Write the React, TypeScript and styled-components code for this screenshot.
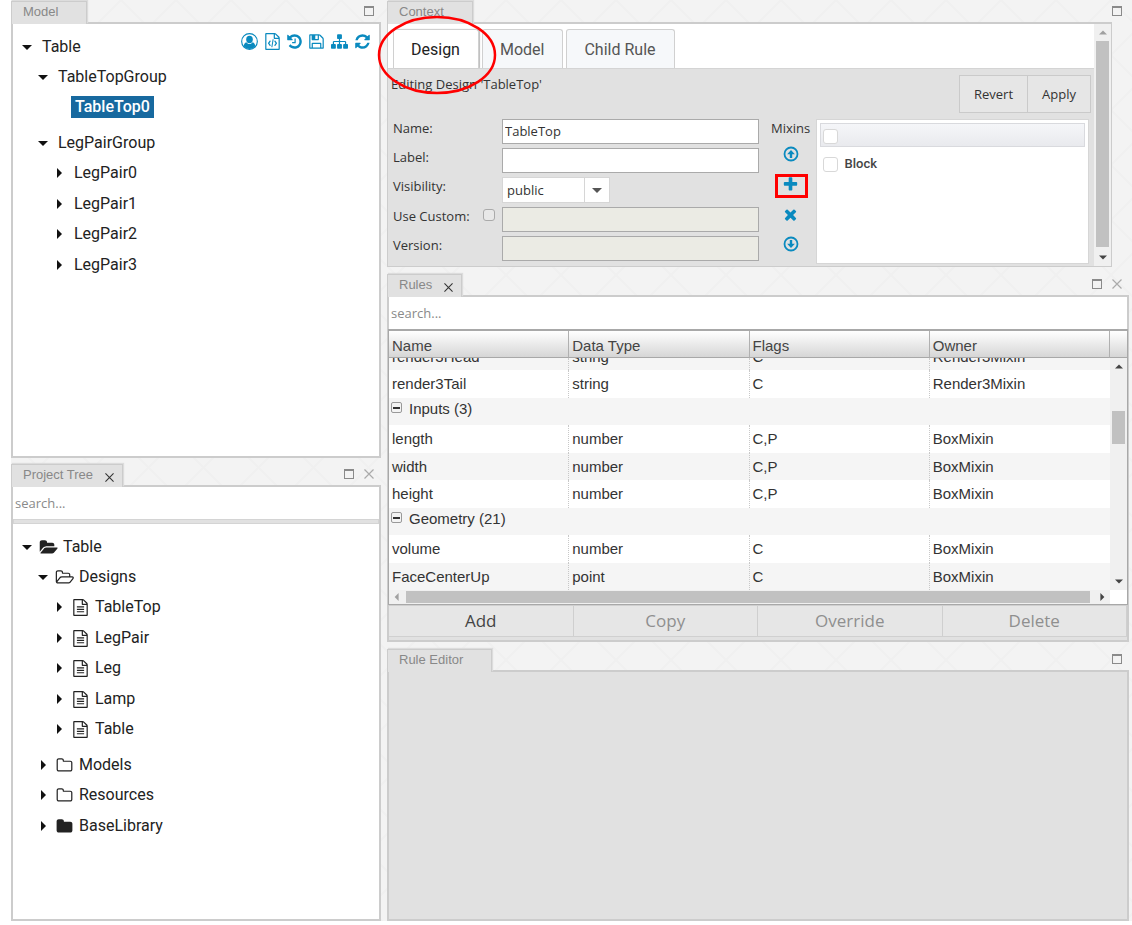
import React from "react";
import styled, { createGlobalStyle, css } from "styled-components";

const LINE = "#cccccc";
const PANEL = "#e1e1e1";
const BLUE = "#0a8abf";
const OPEN_SANS = '"Open Sans", "Noto Sans", sans-serif';
const ROBOTO = 'Roboto, "Liberation Sans", sans-serif';
const ARIAL = '"Liberation Sans", Arial, sans-serif';

const GlobalStyle = createGlobalStyle`
  *, *::before, *::after { box-sizing: border-box; }
  body { margin: 0; background: #fff; color: #333; font-family: ${OPEN_SANS}; }
  button, input, select { font: inherit; color: inherit; margin: 0; border-radius: 0; }
  ul { list-style: none; margin: 0; padding: 0; }
`;

/* ---------- icons ---------- */

const PATHS = {
  folderOpen:
    "M1943 952q0 31-31 66l-336 396q-43 51-120.5 86.5t-143.5 35.5h-1088q-34 0-60.5-13t-26.5-43q0-31 31-66l336-396q43-51 120.5-86.5t143.5-35.5h1088q34 0 60.5 13t26.5 43zm-343-344v160h-832q-94 0-197 47.5t-164 119.5l-337 396-5 6q0-4-.5-12.5t-.5-12.5v-960q0-92 66-158t158-66h320q92 0 158 66t66 158v32h544q92 0 158 66t66 158z",
  folderOpenO:
    "M1845 931q0-35-53-35h-1088q-40 0-85.5 21.5t-71.5 52.5l-294 363q-18 24-18 40 0 35 53 35h1088q40 0 86-22t71-53l294-363q18-22 18-39zm-1141-163h768v-160q0-40-28-68t-68-28h-576q-40 0-68-28t-28-68v-64q0-40-28-68t-68-28h-320q-40 0-68 28t-28 68v853l256-315q44-53 116-87.5t140-34.5zm1269 163q0 62-46 120l-295 363q-43 53-116 87.5t-140 34.5h-1088q-92 0-158-66t-66-158v-960q0-92 66-158t158-66h320q92 0 158 66t66 158v32h544q92 0 158 66t66 158v160h192q54 0 99 24.5t67 70.5q15 32 15 68z",
  folderO:
    "M1600 1312v-704q0-40-28-68t-68-28h-704q-40 0-68-28t-28-68v-64q0-40-28-68t-68-28h-320q-40 0-68 28t-28 68v960q0 40 28 68t68 28h1216q40 0 68-28t28-68zm128-704v704q0 92-66 158t-158 66h-1216q-92 0-158-66t-66-158v-960q0-92 66-158t158-66h320q92 0 158 66t66 158v32h672q92 0 158 66t66 158z",
  folder:
    "M1728 608v704q0 92-66 158t-158 66h-1216q-92 0-158-66t-66-158v-960q0-92 66-158t158-66h320q92 0 158 66t66 158v32h672q92 0 158 66t66 158z",
  fileText:
    "M1596 380q28 28 48 76t20 88v1152q0 40-28 68t-68 28h-1344q-40 0-68-28t-28-68v-1600q0-40 28-68t68-28h896q40 0 88 20t76 48zm-444-244v376h376q-10-29-22-41l-313-313q-12-12-41-22zm384 1528v-1024h-416q-40 0-68-28t-28-68v-416h-768v1536h1280zm-1024-864q0-14 9-23t23-9h704q14 0 23 9t9 23v64q0 14-9 23t-23 9h-704q-14 0-23-9t-9-23v-64zm736 224q14 0 23 9t9 23v64q0 14-9 23t-23 9h-704q-14 0-23-9t-9-23v-64q0-14 9-23t23-9h704zm0 256q14 0 23 9t9 23v64q0 14-9 23t-23 9h-704q-14 0-23-9t-9-23v-64q0-14 9-23t23-9h704z",
  fileCode:
    "M1596 380q28 28 48 76t20 88v1152q0 40-28 68t-68 28h-1344q-40 0-68-28t-28-68v-1600q0-40 28-68t68-28h896q40 0 88 20t76 48zm-444-244v376h376q-10-29-22-41l-313-313q-12-12-41-22zm384 1528v-1024h-416q-40 0-68-28t-28-68v-416h-768v1536h1280zM608 800q8-11 21-12.500t24 6.500l51 38q11 8 12.500 21t-6.500 24l-142 203 142 203q8 11 6.500 24t-12.500 21l-51 38q-11 8-24 6.500t-21-12.500l-186-261q-14-19 0-38zm576 0q-8-11-21-12.500t-24 6.500l-51 38q-11 8-12.500 21t6.500 24l142 203-142 203q-8 11-6.500 24t12.500 21l51 38q11 8 24 6.500t21-12.500l186-261q14-19 0-38zM803 1500q-13-2-20.500-13t-5.500-24l128-781q2-13 13-20.500t24-5.500l43 10q13 2 20.500 13t5.500 24l-128 781q-2 13-13 20.500t-24 5.500z",
  history:
    "M1664 896q0 156-61 298t-164 245-245 164-298 61q-172 0-327-72.5t-264-204.5q-7-10-6.5-22.5t8.5-20.5l137-138q10-9 25-9 16 2 23 12 73 95 179 147t225 52q104 0 198.500-40.500t163.500-109.500 109.500-163.500 40.500-198.500-40.500-198.500-109.500-163.500-163.500-109.500-198.500-40.500q-98 0-188 35.500t-160 101.500l137 138q31 30 14 69-17 40-59 40h-448q-26 0-45-19t-19-45v-448q0-42 40-59 39-17 69 14l130 129q107-101 244.500-156.500t284.500-55.500q156 0 298 61t245 164 164 245 61 298zm-640-288v448q0 14-9 23t-23 9h-320q-14 0-23-9t-9-23v-64q0-14 9-23t23-9h224v-352q0-14 9-23t23-9h64q14 0 23 9t9 23z",
  floppy:
    "M512 1536h768v-384h-768v384zm896 0h128v-896q0-14-10-38.500t-20-34.500l-281-281q-10-10-34-20t-39-10v416q0 40-28 68t-68 28h-576q-40 0-68-28t-28-68v-416h-128v1280h128v-416q0-40 28-68t68-28h832q40 0 68 28t28 68v416zm-384-928v-320q0-13-9.500-22.500t-22.500-9.500h-192q-13 0-22.500 9.500t-9.500 22.500v320q0 13 9.500 22.500t22.500 9.500h192q13 0 22.500-9.500t9.500-22.500zm640 32v928q0 40-28 68t-68 28h-1344q-40 0-68-28t-28-68v-1344q0-40 28-68t68-28h928q40 0 88 20t76 48l280 280q28 28 48 76t20 88z",
  sitemap:
    "M1792 1248v320q0 40-28 68t-68 28h-320q-40 0-68-28t-28-68v-320q0-40 28-68t68-28h96v-192h-512v192h96q40 0 68 28t28 68v320q0 40-28 68t-68 28h-320q-40 0-68-28t-28-68v-320q0-40 28-68t68-28h96v-192h-512v192h96q40 0 68 28t28 68v320q0 40-28 68t-68 28h-320q-40 0-68-28t-28-68v-320q0-40 28-68t68-28h96v-192q0-52 38-90t90-38h512v-192h-96q-40 0-68-28t-28-68v-320q0-40 28-68t68-28h320q40 0 68 28t28 68v320q0 40-28 68t-68 28h-96v192h512q52 0 90 38t38 90v192h96q40 0 68 28t28 68z",
  refresh:
    "M1639 1056q0 5-1 7-64 268-268 434.500t-478 166.500q-146 0-282.500-55t-243.500-157l-129 129q-19 19-45 19t-45-19-19-45v-448q0-26 19-45t45-19h448q26 0 45 19t19 45-19 45l-137 137q71 66 161 102t187 36q134 0 250-65t186-179q11-17 53-117 8-23 30-23h192q13 0 22.500 9.500t9.500 22.500zm25-800v448q0 26-19 45t-45 19h-448q-26 0-45-19t-19-45 19-45l138-138q-148-137-349-137-134 0-250 65t-186 179q-11 17-53 117-8 23-30 23h-199q-13 0-22.500-9.500t-9.500-22.500v-7q65-268 270-434.500t480-166.500q146 0 284 55.500t245 156.500l130-129q19-19 45-19t45 19 19 45z",
  plus:
    "M1600 736v192q0 40-28 68t-68 28h-416v416q0 40-28 68t-68 28h-192q-40 0-68-28t-28-68v-416h-416q-40 0-68-28t-28-68v-192q0-40 28-68t68-28h416v-416q0-40 28-68t68-28h192q40 0 68 28t28 68v416h416q40 0 68 28t28 68z",
  times:
    "M1490 1322q0 40-28 68l-136 136q-28 28-68 28t-68-28l-294-294-294 294q-28 28-68 28t-68-28l-136-136q-28-28-28-68t28-68l294-294-294-294q-28-28-28-68t28-68l136-136q28-28 68-28t68 28l294 294 294-294q28-28 68-28t68 28l136 136q28 28 28 68t-28 68l-294 294 294 294q28 28 28 68z",
};

type IconName = keyof typeof PATHS;

/* narrow glyphs occupy six sevenths of the em box */
const BOXES: Partial<Record<IconName, [number, number, number]>> = {
  folderOpen: [0, 1973, 19],
  folderOpenO: [0, 1973, 19],
  fileCode: [128, 1536, 15],
  fileText: [128, 1536, 15],
  history: [128, 1536, 15],
  floppy: [128, 1536, 15],
  refresh: [128, 1536, 15],
};

const Svg = styled.svg`
  display: block;
  flex: none;
  fill: currentColor;
`;

function Icon({ name }: { name: IconName }) {
  const [x, w, px] = BOXES[name] ?? [0, 1792, 17];
  return (
    <Svg width={px} height={17} viewBox={`${x} 0 ${w} 1792`} aria-hidden="true">
      <path d={PATHS[name]} />
    </Svg>
  );
}

function UserIcon() {
  return (
    <Svg width={17} height={17} viewBox="0 0 18 18" aria-hidden="true">
      <circle cx="9" cy="9" r="8.300" fill="none" stroke="currentColor" strokeWidth="1.200" />
      <ellipse cx="9" cy="6.900" rx="3.500" ry="3.900" />
      <path d="M5.700 9.800C3.900 10.400 3 12 2.900 14.100C4.400 15.900 6.500 17 9 17s4.600-1.100 6.100-2.900C15 12 14.100 10.400 12.300 9.800C11.500 11 10.300 11.700 9 11.700S6.500 11 5.700 9.800z" />
    </Svg>
  );
}

function ArrowCircle({ down }: { down?: boolean }) {
  return (
    <Svg width={16} height={16} viewBox="0 0 16 16" aria-hidden="true">
      <circle cx="8" cy="8" r="6.500" fill="none" stroke="currentColor" strokeWidth="1.800" />
      <path d={down ? "M6.800 4h2.400v3.800h2.700L8 12 4.100 7.800h2.700z" : "M6.800 12h2.400V8.200h2.700L8 4 4.100 8.200h2.700z"} />
    </Svg>
  );
}

type Direction = "up" | "down" | "left" | "right";

const ARROWS: Record<Direction, string> = {
  up: "M0 7l5-5 5 5z",
  down: "M0 3l5 5 5-5z",
  left: "M7 0L2 5l5 5z",
  right: "M3 0l5 5-5 5z",
};

function Arrow({ to, size = 8 }: { to: Direction; size?: number }) {
  return (
    <Svg width={size} height={size} viewBox="0 0 10 10" aria-hidden="true">
      <path d={ARROWS[to]} />
    </Svg>
  );
}

function CrossIcon({ size }: { size: number }) {
  return (
    <Svg width={size} height={size} viewBox="0 0 10 10" aria-hidden="true">
      <path d="M.5.5l9 9M9.500.5l-9 9" fill="none" stroke="currentColor" strokeWidth="1.200" />
    </Svg>
  );
}

/* ---------- docking panels ---------- */

const Page = styled.main`
  min-height: 100vh;
  padding: 0 0 4px 11px;
  display: flex;
`;

const Workspace = styled.div`
  flex: 1;
  min-width: 0;
  display: grid;
  grid-template-columns: minmax(0, 370fr) minmax(0, 742fr);
  gap: 6px;
  padding-right: 3px;
  background-color: #f3f3f3;
  background-image: linear-gradient(45deg, transparent 49%, #f0f0f0 49%, #f0f0f0 51%, transparent 51%),
    linear-gradient(-45deg, transparent 49%, #f0f0f0 49%, #f0f0f0 51%, transparent 51%);
  background-size: 55px 55px;
`;

const LeftColumn = styled.div`
  display: grid;
  grid-template-rows: 1fr 1fr;
  gap: 5px;
`;

const RightColumn = styled.div`
  display: flex;
  flex-direction: column;
  gap: 6px;
  min-width: 0;
`;

const Panel = styled.section<{ $grow?: boolean }>`
  display: flex;
  flex-direction: column;
  min-width: 0;
  ${(p) => p.$grow && css`flex: 1;`}
`;

const PanelHead = styled.header`
  height: 22px;
  padding-top: 1px;
  display: flex;
  align-items: flex-start;
`;

const PanelTab = styled.div<{ $wide?: boolean }>`
  position: relative;
  height: 23px;
  padding: 0 ${(p) => (p.$wide ? 28 : 8)}px 2px 11px;
  display: flex;
  align-items: center;
  gap: 12px;
  border: 1px solid ${LINE};
  border-bottom: 0;
  background: ${PANEL};
  box-shadow: 1px -1px 1px #dcdcdc;
  color: #888;
  font: 13px/20px ${ARIAL};
  white-space: nowrap;
`;

const PanelTools = styled.div`
  margin-left: auto;
  padding: 5px 7px 0 0;
  display: flex;
  gap: 10px;
  color: #aaa;
`;

const PlainButton = styled.button`
  display: flex;
  align-items: center;
  justify-content: center;
  padding: 0;
  border: 0;
  background: none;
  cursor: pointer;
`;

const CloseTab = styled(PlainButton)`
  padding-top: 4px;
  color: #333;
`;

const Maximize = styled.button`
  width: 10px;
  height: 10px;
  padding: 0;
  border: 1px solid #8a8a8a;
  border-top-width: 2px;
  background: none;
  cursor: pointer;
`;

const PanelBody = styled.div<{ $fill?: string }>`
  flex: 1;
  display: flex;
  flex-direction: column;
  border: 2px solid ${LINE};
  background: ${(p) => p.$fill ?? "#fff"};
  min-width: 0;
`;

type HeaderProps = { title: string; closable?: boolean; wide?: boolean };

function Header({ title, closable, wide }: HeaderProps) {
  return (
    <PanelHead>
      <PanelTab $wide={wide}>
        {title}
        {closable && (
          <CloseTab aria-label={`Close ${title}`}>
            <CrossIcon size={9} />
          </CloseTab>
        )}
      </PanelTab>
      <PanelTools>
        <Maximize aria-label={`Maximize ${title}`} />
        {closable && (
          <PlainButton aria-label={`Hide ${title}`}>
            <CrossIcon size={10} />
          </PlainButton>
        )}
      </PanelTools>
    </PanelHead>
  );
}

/* ---------- trees ---------- */

const TreeArea = styled.div`
  flex: 1;
  display: flex;
  align-items: flex-start;
  padding: 8px 9px 8px 6px;
`;

const TreeRoot = styled.ul`
  flex: 1;
  color: #222;
  font: 16px/30px ${ROBOTO};
`;

const Branch = styled.ul`
  padding: 0 0 5px 16px;
`;

const TreeItem = styled.li`
  &:nth-child(even) {
    margin-top: 1px;
  }
`;

const TreeRow = styled.div`
  display: flex;
  align-items: center;
  height: 30px;
`;

const Toggle = styled(PlainButton)`
  width: 16px;
  height: 16px;
  color: #111;
`;

const IconSlot = styled.span`
  width: 22px;
  margin: 0 -3px 0 2px;
  display: flex;
  justify-content: center;
`;

const NodeLabel = styled.span`
  margin-left: 3px;
  padding: 0 4px;
  line-height: 22px;
  white-space: nowrap;
`;

const SelectedLabel = styled(NodeLabel)`
  margin-left: 20px;
  background: #17699f;
  color: #fff;
  font-weight: 500;
`;

const IconBar = styled.div`
  display: flex;
  align-items: center;
  gap: 7px;
  padding-top: 1px;
  color: ${BLUE};
  button { color: inherit; }
`;

type TreeNode = { label: string; icon?: IconName; selected?: boolean; children?: TreeNode[] };

function Node({ node }: { node: TreeNode }) {
  return (
    <TreeItem>
      <TreeRow>
        {node.selected ? (
          <SelectedLabel>{node.label}</SelectedLabel>
        ) : (
          <>
            <Toggle aria-label={`Toggle ${node.label}`}>
              <Arrow to={node.children ? "down" : "right"} size={10} />
            </Toggle>
            {node.icon && <IconSlot><Icon name={node.icon} /></IconSlot>}
            <NodeLabel>{node.label}</NodeLabel>
          </>
        )}
      </TreeRow>
      {node.children && (
        <Branch>
          {node.children.map((c) => <Node key={c.label} node={c} />)}
        </Branch>
      )}
    </TreeItem>
  );
}

const MODEL: TreeNode = {
  label: "Table",
  children: [
    { label: "TableTopGroup", children: [{ label: "TableTop0", selected: true }] },
    {
      label: "LegPairGroup",
      children: ["LegPair0", "LegPair1", "LegPair2", "LegPair3"].map((label) => ({ label })),
    },
  ],
};

const PROJECT: TreeNode = {
  label: "Table",
  icon: "folderOpen",
  children: [
    {
      label: "Designs",
      icon: "folderOpenO",
      children: ["TableTop", "LegPair", "Leg", "Lamp", "Table"].map((label) => ({ label, icon: "fileText" as IconName })),
    },
    { label: "Models", icon: "folderO" },
    { label: "Resources", icon: "folderO" },
    { label: "BaseLibrary", icon: "folder" },
  ],
};

const Search = styled.input`
  width: 100%;
  height: 32px;
  padding: 0 2px;
  border: 0;
  background: #fff;
  font-size: 13px;
  &::placeholder { color: #8a8a8a; opacity: 1; }
`;

const Divider = styled.div`
  height: 5px;
  border: 1px solid #d4d4d4;
  background: ${PANEL};
`;

/* ---------- context panel ---------- */

const ContextBody = styled.div`
  display: flex;
  margin-right: 17px;
  border: 1px solid ${LINE};
  border-top-width: 2px;
  background: ${PANEL};
`;

const ContextContent = styled.div`
  flex: 1;
  min-width: 0;
`;

const Tabs = styled.div`
  display: flex;
  align-items: flex-end;
  gap: 3px;
  height: 45px;
  padding-left: 5px;
  border-bottom: 1px solid #d4d4d4;
  background: #fff;
`;

const Tab = styled.button<{ $active?: boolean }>`
  height: 39px;
  padding: 2px 18px 0 17px;
  border: 1px solid #d0d0d0;
  border-bottom: 0;
  border-radius: 3px 3px 0 0;
  background: ${(p) => (p.$active ? "#fff" : "#f6f8fa")};
  color: ${(p) => (p.$active ? "#222" : "#555")};
  font: 16px/36px ${ROBOTO};
  ${(p) => p.$active && css`box-shadow: 1px 0 1px #bbb;`}
`;

const EditBar = styled.div`
  display: flex;
  align-items: flex-start;
  justify-content: space-between;
  padding: 6px 3px 6px 3px;
  font-size: 13px;
  line-height: 18px;
`;

const EditButtons = styled.div`
  display: flex;
`;

const FormButton = styled.button`
  height: 38px;
  padding: 0 14px;
  border: 1px solid #cacaca;
  background: #e6e6e6;
  font-size: 13px;
  & + & { margin-left: -1px; }
`;

const Form = styled.div`
  display: grid;
  grid-template-columns: minmax(0, 365fr) 57px minmax(0, 273fr);
  padding: 0 5px 2px;
  font-size: 13px;
  line-height: 18px;
`;

const Fields = styled.div`
  display: flex;
  flex-direction: column;
  gap: 4px;
`;

const Field = styled.div`
  display: flex;
  align-items: flex-start;
`;

const FieldLabel = styled.label`
  width: 90px;
  flex: none;
`;

const CheckSlot = styled.div`
  width: 19px;
  height: 16px;
  flex: none;
  display: flex;
  align-items: center;
`;

const Check = styled.input<{ $size: number }>`
  appearance: none;
  flex: none;
  width: ${(p) => p.$size}px;
  height: ${(p) => p.$size}px;
  border: 1px solid ${(p) => (p.$size > 12 ? "#d8d8d8" : "#aaa")};
  border-radius: 3px;
  background: ${(p) => (p.$size > 12 ? "#fff" : "#e8e8e8")};
`;

const TextInput = styled.input`
  flex: 1;
  min-width: 0;
  height: 25px;
  padding: 0 2px 2px;
  border: 1px solid #aaa;
  background: #fff;
  &:disabled { background: #ebebe4; }
`;

const SelectBox = styled.div`
  position: relative;
  display: flex;
  border: 1px solid #d6d6d6;
  background: #fff;
`;

const Select = styled.select`
  appearance: none;
  width: 106px;
  height: 24px;
  padding: 0 28px 0 4px;
  border: 0;
  background: none;
`;

const SelectArrow = styled.span`
  position: absolute;
  inset: 0 0 0 auto;
  width: 25px;
  display: flex;
  align-items: center;
  justify-content: center;
  border-left: 1px solid #d6d6d6;
  color: #555;
  pointer-events: none;
`;

const MixinTools = styled.div`
  display: flex;
  flex-direction: column;
  align-items: center;
  padding-left: 7px;
`;

const MixinTitle = styled.span`
  margin-bottom: 2px;
`;

const MixinButton = styled(PlainButton)<{ $marked?: boolean }>`
  position: relative;
  height: 30px;
  width: 32px;
  color: ${BLUE};
  ${(p) => p.$marked && css`
    &::after {
      content: "";
      position: absolute;
      inset: 5px -1px 1px 0;
      border: 3px solid #f00;
    }
  `}
`;

const MixinList = styled.div`
  min-height: 145px;
  border: 1px solid #d6d6d6;
  background: #fff;
  padding: 3px;
  color: #444;
`;

const MixinHead = styled.div`
  height: 24px;
  padding: 2px 2px 0;
  display: flex;
  align-items: center;
  border: 1px solid #d9dade;
  background: linear-gradient(#f5f6f9, #e9eaee);
`;

const MixinRow = styled.label`
  display: flex;
  align-items: center;
  gap: 7px;
  height: 34px;
  padding-left: 3px;
  font: 500 13px/18px ${ROBOTO};
`;

/* ---------- scrollbars ---------- */

const ScrollY = styled.div`
  width: 17px;
  flex: none;
  display: flex;
  flex-direction: column;
  align-items: center;
  justify-content: space-between;
  background: #f0f0f0;
  color: #444;
  padding: 5px 0;
`;

const ThumbY = styled.div<{ $full?: boolean }>`
  width: 13px;
  background: #c1c1c1;
  ${(p) => (p.$full ? css`flex: 1; margin: 4px 0 6px;` : css`height: 33px; margin: 40px 0 auto;`)}
`;

const ScrollX = styled.div`
  display: flex;
  align-items: stretch;
  height: 14px;
  background: #fff;
`;

const ScrollTrack = styled.div`
  flex: 1;
  display: flex;
  align-items: center;
  gap: 5px;
  padding: 0 4px;
  background: #f0f0f0;
  color: #444;
`;

const ThumbX = styled.div`
  flex: 1;
  height: 12px;
  margin-right: 3px;
  background: #c1c1c1;
`;

const ScrollCorner = styled.div`
  width: 17px;
`;

const Faint = styled.span`
  color: #a0a0a0;
`;

/* ---------- rules grid ---------- */

const Grid = styled.div`
  border: 1px solid #a8a8a8;
  border-top-width: 2px;
  font: 15px/25px ${ARIAL};
  margin: 0 -1px;
`;

const GridMain = styled.div`
  display: flex;
`;

const TableArea = styled.div`
  flex: 1;
  min-width: 0;
`;

const Table = styled.table`
  width: 100%;
  table-layout: fixed;
  border-collapse: separate;
  border-spacing: 0;
  color: #333;
`;

const HeadCell = styled.th`
  height: 27px;
  padding: 3px 3px 0;
  border-right: 1px solid #b0b0b0;
  border-bottom: 1px solid #a8a8a8;
  background: linear-gradient(#fff, #d6d6d6);
  color: #444;
  font-weight: 400;
  line-height: 23px;
  text-align: left;
`;

const Row = styled.tr<{ $shade?: boolean }>`
  background: ${(p) => (p.$shade ? "#f5f5f5" : "#fff")};
  &:nth-child(odd) td { height: 27px; }
  &:nth-child(even) td { height: 28px; }
`;

const Cell = styled.td`
  padding: 0 3px 1px;
  border-right: 1px dotted #c8c8c8;
  &:last-child { border-right: 0; }
`;

const ClippedRow = styled.tr`
  background: #f5f5f5;
`;

const ClippedText = styled.div`
  height: 11px;
  display: flex;
  align-items: flex-end;
  overflow: hidden;
`;

const GroupCell = styled.td`
  padding: 0 2px;
  line-height: 21px;
  vertical-align: top;
`;

const GroupTitle = styled.div`
  display: flex;
  align-items: flex-start;
  gap: 7px;
`;

const Collapse = styled(PlainButton)`
  width: 11px;
  height: 11px;
  margin-top: 4px;
  border: 1px solid #999;
  border-radius: 2px;
  background: #f4f4f4;
  &::before {
    content: "";
    width: 7px;
    height: 2px;
    background: #333;
  }
`;

const SideBar = styled.div`
  display: flex;
  flex-direction: column;
  width: 17px;
  flex: none;
`;

const SideHead = styled.div`
  height: 27px;
  border-bottom: 1px solid #a8a8a8;
  background: linear-gradient(#fff, #d6d6d6);
`;

const SideScroll = styled(ScrollY)`
  flex: 1;
`;

const Actions = styled.div`
  display: grid;
  grid-template-columns: repeat(4, 1fr);
  border-bottom: 1px solid #d0d0d0;
  margin-bottom: 3px;
`;

const ActionButton = styled.button`
  height: 31px;
  padding: 0;
  border: 1px solid #cfcfcf;
  border-width: 1px 1px 0 0;
  background: #e6e6e6;
  color: #444;
  font-size: 17px;
  line-height: 24px;
  &:disabled { color: #8f8f8f; }
`;

type RuleRow = { group: string } | { cells: string[]; shade?: boolean };

const RULES: RuleRow[] = [
  { cells: ["render3Tail", "string", "C", "Render3Mixin"] },
  { group: "Inputs (3)" },
  { cells: ["length", "number", "C,P", "BoxMixin"] },
  { cells: ["width", "number", "C,P", "BoxMixin"], shade: true },
  { cells: ["height", "number", "C,P", "BoxMixin"] },
  { group: "Geometry (21)" },
  { cells: ["volume", "number", "C", "BoxMixin"] },
  { cells: ["FaceCenterUp", "point", "C", "BoxMixin"], shade: true },
];

/* ---------- annotation ---------- */

const TabRing = styled.svg`
  position: absolute;
  z-index: 2;
  left: 377px;
  top: 15px;
  overflow: visible;
  pointer-events: none;
`;

export default function App() {
  return (
    <Page>
      <GlobalStyle />
      <Workspace>
        <LeftColumn>
          <Panel>
            <Header title="Model" wide />
            <PanelBody>
              <TreeArea>
                <TreeRoot><Node node={MODEL} /></TreeRoot>
                <IconBar>
                  <PlainButton aria-label="User"><UserIcon /></PlainButton>
                  {(["fileCode", "history", "floppy", "sitemap", "refresh"] as IconName[]).map((n) => (
                    <PlainButton key={n} aria-label={n}><Icon name={n} /></PlainButton>
                  ))}
                </IconBar>
              </TreeArea>
            </PanelBody>
          </Panel>
          <Panel>
            <Header title="Project Tree" closable />
            <PanelBody>
              <Search placeholder="search..." aria-label="Search project" />
              <Divider />
              <TreeArea>
                <TreeRoot><Node node={PROJECT} /></TreeRoot>
              </TreeArea>
            </PanelBody>
          </Panel>
        </LeftColumn>

        <RightColumn>
          <Panel>
            <Header title="Context" wide />
            <ContextBody>
              <ContextContent>
                <Tabs role="tablist">
                  <Tab role="tab" $active>Design</Tab>
                  <Tab role="tab">Model</Tab>
                  <Tab role="tab">Child Rule</Tab>
                </Tabs>
                <EditBar>
                  <span>Editing Design 'TableTop'</span>
                  <EditButtons>
                    <FormButton>Revert</FormButton>
                    <FormButton>Apply</FormButton>
                  </EditButtons>
                </EditBar>
                <Form>
                  <Fields>
                    <Field>
                      <FieldLabel htmlFor="name">Name:</FieldLabel>
                      <CheckSlot />
                      <TextInput id="name" defaultValue="TableTop" />
                    </Field>
                    <Field>
                      <FieldLabel htmlFor="label">Label:</FieldLabel>
                      <CheckSlot />
                      <TextInput id="label" />
                    </Field>
                    <Field>
                      <FieldLabel htmlFor="visibility">Visibility:</FieldLabel>
                      <CheckSlot />
                      <SelectBox>
                        <Select id="visibility" defaultValue="public">
                          <option>public</option>
                        </Select>
                        <SelectArrow><Arrow to="down" size={10} /></SelectArrow>
                      </SelectBox>
                    </Field>
                    <Field>
                      <FieldLabel htmlFor="custom">Use Custom:</FieldLabel>
                      <CheckSlot><Check id="custom" type="checkbox" $size={12} /></CheckSlot>
                      <TextInput disabled aria-label="Custom value" />
                    </Field>
                    <Field>
                      <FieldLabel htmlFor="version">Version:</FieldLabel>
                      <CheckSlot />
                      <TextInput id="version" disabled />
                    </Field>
                  </Fields>
                  <MixinTools>
                    <MixinTitle>Mixins</MixinTitle>
                    <MixinButton aria-label="Move up"><ArrowCircle /></MixinButton>
                    <MixinButton aria-label="Add mixin" $marked><Icon name="plus" /></MixinButton>
                    <MixinButton aria-label="Remove mixin"><Icon name="times" /></MixinButton>
                    <MixinButton aria-label="Move down"><ArrowCircle down /></MixinButton>
                  </MixinTools>
                  <MixinList>
                    <MixinHead><Check type="checkbox" aria-label="Select all" $size={15} /></MixinHead>
                    <MixinRow><Check type="checkbox" $size={15} />Block</MixinRow>
                  </MixinList>
                </Form>
              </ContextContent>
              <ScrollY>
                <Faint><Arrow to="up" /></Faint>
                <ThumbY $full />
                <Arrow to="down" />
              </ScrollY>
            </ContextBody>
          </Panel>

          <Panel>
            <Header title="Rules" closable />
            <PanelBody $fill={PANEL}>
              <Search placeholder="search..." aria-label="Search rules" />
              <Grid>
                <GridMain>
                  <TableArea>
                    <Table>
                      <thead>
                        <tr>
                          {["Name", "Data Type", "Flags", "Owner"].map((h) => <HeadCell key={h}>{h}</HeadCell>)}
                        </tr>
                      </thead>
                      <tbody>
                        <ClippedRow>
                          {["render3Head", "string", "C", "Render3Mixin"].map((c) => (
                            <Cell key={c}><ClippedText>{c}</ClippedText></Cell>
                          ))}
                        </ClippedRow>
                        {RULES.map((r) =>
                          "group" in r ? (
                            <Row key={r.group} $shade>
                              <GroupCell colSpan={4}>
                                <GroupTitle><Collapse aria-label={`Collapse ${r.group}`} />{r.group}</GroupTitle>
                              </GroupCell>
                            </Row>
                          ) : (
                            <Row key={r.cells[0]} $shade={r.shade}>
                              {r.cells.map((c) => <Cell key={c}>{c}</Cell>)}
                            </Row>
                          )
                        )}
                      </tbody>
                    </Table>
                  </TableArea>
                  <SideBar>
                    <SideHead />
                    <SideScroll>
                      <Arrow to="up" />
                      <ThumbY />
                      <Arrow to="down" />
                    </SideScroll>
                  </SideBar>
                </GridMain>
                <ScrollX>
                  <ScrollTrack>
                    <Faint><Arrow to="left" /></Faint>
                    <ThumbX />
                    <Arrow to="right" />
                  </ScrollTrack>
                  <ScrollCorner />
                </ScrollX>
              </Grid>
              <Actions>
                <ActionButton>Add</ActionButton>
                <ActionButton disabled>Copy</ActionButton>
                <ActionButton disabled>Override</ActionButton>
                <ActionButton disabled>Delete</ActionButton>
              </Actions>
            </PanelBody>
          </Panel>

          <Panel $grow>
            <Header title="Rule Editor" wide />
            <PanelBody $fill={PANEL} />
          </Panel>
        </RightColumn>
      </Workspace>
      <TabRing width="120" height="80" viewBox="0 0 120 80" aria-hidden="true">
        <ellipse cx="60" cy="40" rx="58" ry="38" fill="none" stroke="#f00" strokeWidth="2.500" />
      </TabRing>
    </Page>
  );
}
